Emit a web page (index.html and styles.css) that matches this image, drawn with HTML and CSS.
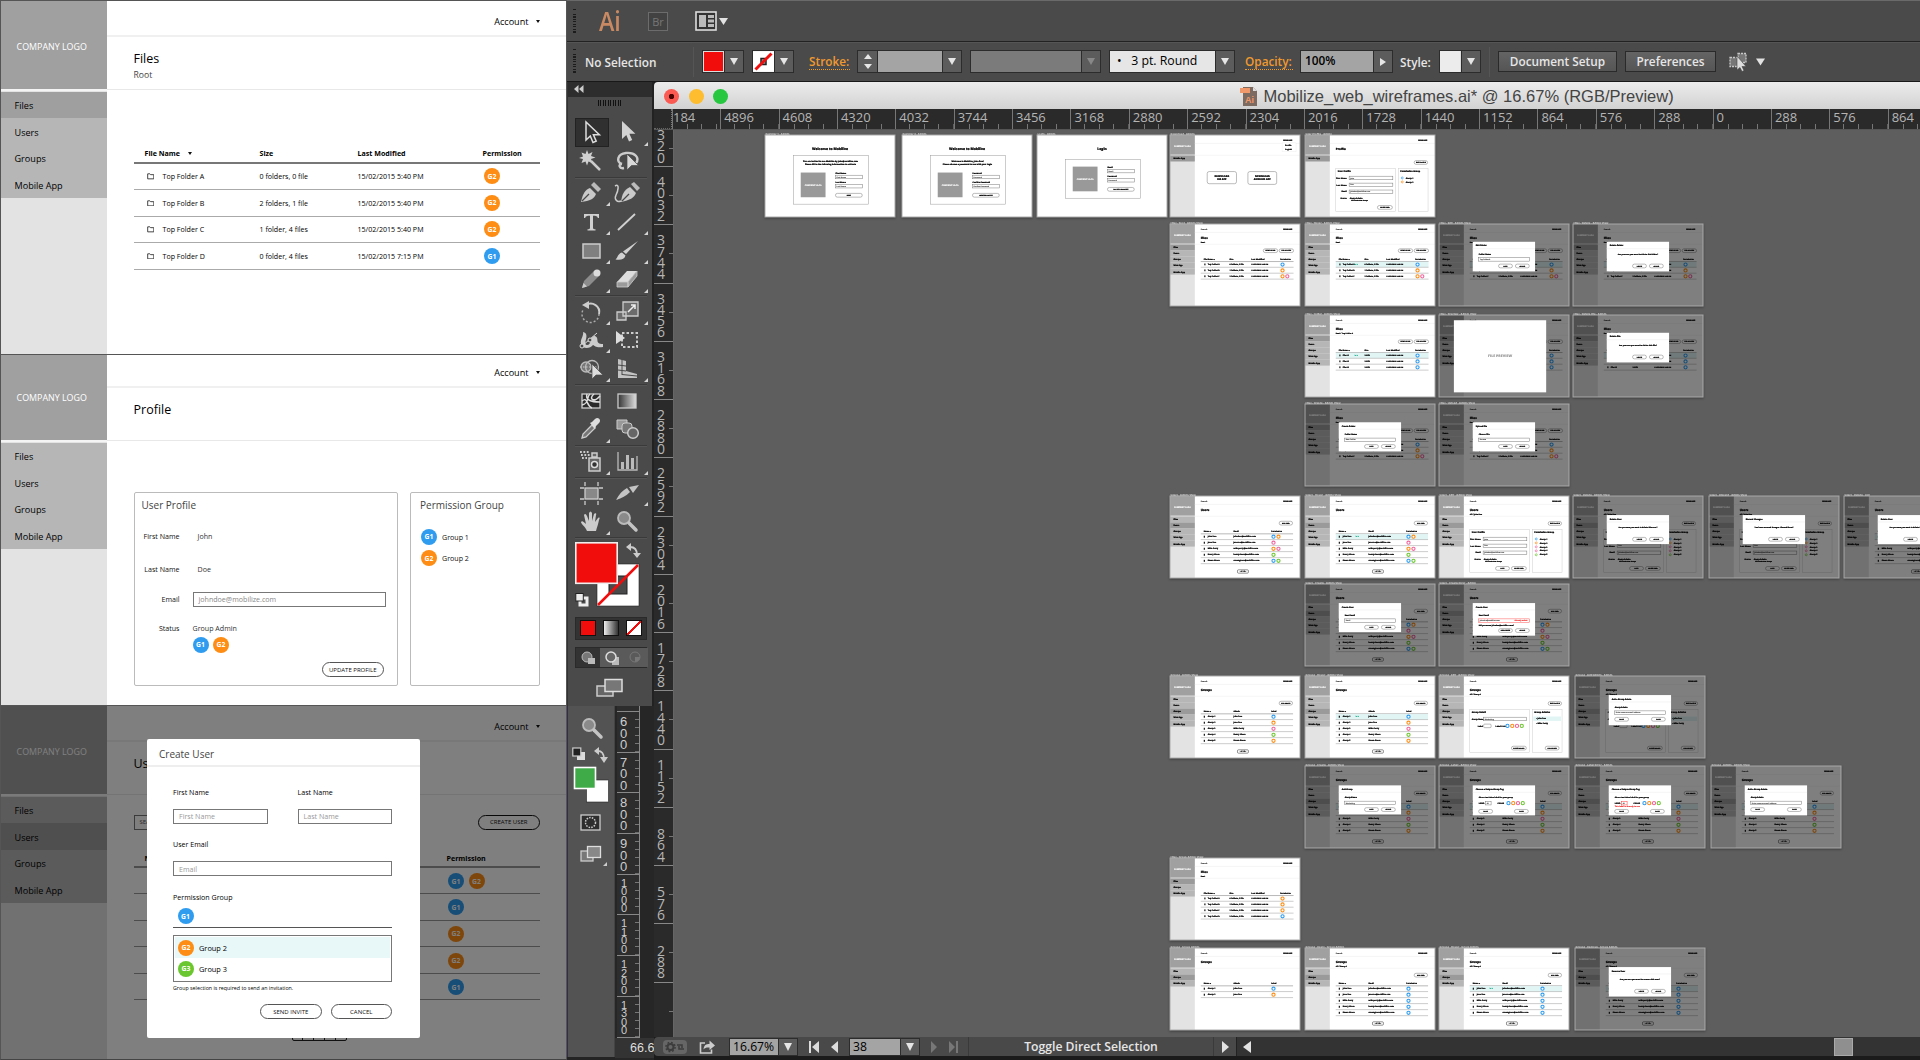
FILE: index.html
```html
<!DOCTYPE html>
<html lang="en">
<head>
<meta charset="utf-8">
<title>Mobilize_web_wireframes.ai</title>
<link rel="stylesheet" href="styles.css">
</head>
<body>
<div class="desktop">
<aside class="wires">
  <section class="wire wire-files">
    <div class="wire-in">
      <nav class="side"><div class="logo">COMPANY LOGO</div><a class="on">Files</a><a>Users</a><a>Groups</a><a>Mobile App</a></nav>
      <div class="main">
        <header class="acct">Account<i class="tri"></i></header>
        <div class="head"><h1>Files</h1><p>Root</p></div>
        <div class="table">
          <div class="tr th"><span>File Name<i class="tri"></i></span><span>Size</span><span>Last Modified</span><span>Permission</span></div>
          <div class="tr"><span><svg class="fold" viewBox="0 0 8 7"><path d="M.7.9h2.4l.8.9h3.4v4.5H.7z"/></svg>Top Folder A</span><span>0 folders, 0 file</span><span>15/02/2015 5:40 PM</span><span><b class="g g2">G2</b></span></div>
          <div class="tr"><span><svg class="fold" viewBox="0 0 8 7"><path d="M.7.9h2.4l.8.9h3.4v4.5H.7z"/></svg>Top Folder B</span><span>2 folders, 1 file</span><span>15/02/2015 5:40 PM</span><span><b class="g g2">G2</b></span></div>
          <div class="tr"><span><svg class="fold" viewBox="0 0 8 7"><path d="M.7.9h2.4l.8.9h3.4v4.5H.7z"/></svg>Top Folder C</span><span>1 folder, 4 files</span><span>15/02/2015 5:40 PM</span><span><b class="g g2">G2</b></span></div>
          <div class="tr"><span><svg class="fold" viewBox="0 0 8 7"><path d="M.7.9h2.4l.8.9h3.4v4.5H.7z"/></svg>Top Folder D</span><span>0 folder, 4 files</span><span>15/02/2015 7:15 PM</span><span><b class="g g1">G1</b></span></div>
        </div>
      </div>
    </div>
  </section>

  <section class="wire wire-profile">
    <div class="wire-in">
      <nav class="side"><div class="logo">COMPANY LOGO</div><a>Files</a><a>Users</a><a>Groups</a><a>Mobile App</a></nav>
      <div class="main">
        <header class="acct">Account<i class="tri"></i></header>
        <div class="head"><h1>Profile</h1></div>
        <div class="cards">
          <div class="card">
            <h2>User Profile</h2>
            <dl class="form">
              <dt>First Name</dt><dd class="in">John</dd>
              <dt>Last Name</dt><dd class="in">Doe</dd>
              <dt>Email</dt><dd><div class="field">johndoe@mobilize.com</div></dd>
              <dt>Status</dt><dd>Group Admin</dd>
            </dl>
            <div class="badges"><b class="g g1">G1</b><b class="g g2">G2</b></div>
            <div class="pill">UPDATE PROFILE</div>
          </div>
          <div class="card slim">
            <h2>Permission Group</h2>
            <div class="opt"><b class="g g1">G1</b>Group 1</div>
            <div class="opt"><b class="g g2">G2</b>Group 2</div>
          </div>
        </div>
      </div>
    </div>
  </section>

  <section class="wire wire-users">
    <div class="wire-in">
      <nav class="side"><div class="logo">COMPANY LOGO</div><a>Files</a><a class="on">Users</a><a>Groups</a><a>Mobile App</a></nav>
      <div class="main">
        <header class="acct">Account<i class="tri"></i></header>
        <div class="head"><h1>Users</h1></div>
        <div class="bar"><div class="field">SEARCH</div><div class="pill">CREATE USER</div></div>
        <div class="table">
          <div class="tr th"><span>Name</span><span>Permission</span></div>
          <div class="tr"><span></span><span><b class="g g1">G1</b><b class="g g2">G2</b></span></div>
          <div class="tr"><span></span><span><b class="g g1">G1</b></span></div>
          <div class="tr"><span></span><span><b class="g g2">G2</b></span></div>
          <div class="tr"><span></span><span><b class="g g2">G2</b></span></div>
          <div class="tr"><span></span><span><b class="g g1">G1</b></span></div>
        </div>
        <div class="pager"><i>&lt;</i><i>1</i><i>2</i><i>3</i><i>&gt;</i></div>
      </div>
    </div>
    <div class="shade"></div>
    <div class="modal">
      <h2>Create User</h2>
      <div class="modal-body">
        <div class="two"><label>First Name<span class="field">First Name</span></label><label>Last Name<span class="field">Last Name</span></label></div>
        <label>User Email<span class="field">Email</span></label>
        <label class="pg">Permission Group</label>
        <div class="chosen"><b class="g g1">G1</b></div>
        <div class="list"><div class="opt hot"><b class="g g2">G2</b>Group 2</div><div class="opt"><b class="g g3">G3</b>Group 3</div></div>
        <p class="hint">Group selection is required to send an invitation.</p>
        <div class="acts"><div class="pill">SEND INVITE</div><div class="pill">CANCEL</div></div>
      </div>
    </div>
  </section>
</aside>

<main class="app">
  <div class="appbar">
    <i class="grip"></i><span class="ai">Ai</span><span class="br">Br</span>
    <svg class="layout" width="34" height="20" viewBox="0 0 34 20"><rect x="1" y="1" width="20" height="18" fill="#333" stroke="#ddd" stroke-width="1.6"/><path d="M4 4h7v12H4zM13 4h6v3h-6zM13 8.500h6v3h-6zM13 13h6v3h-6z" fill="#bbb"/><path d="M24 7h9l-4.500 7z" fill="#e2e2e2"/></svg>
  </div>
  <div class="control">
    <i class="grip"></i><span class="sel">No Selection</span><i class="vsep"></i>
    <div class="combo c-fill"><span class="sw red"></span><i class="dd"></i></div>
    <div class="combo c-stroke"><svg class="sw" viewBox="0 0 21 20"><rect width="21" height="20" fill="#fff"/><rect x="8" y="7" width="5" height="6" fill="#999" stroke="#222" stroke-width="1.500"/><path d="M2.500 18L18.500 2" stroke="#f00f0f" stroke-width="3"/></svg><i class="dd"></i></div>
    <span class="lnk l-stroke">Stroke:</span>
    <div class="combo c-weight"><span class="spin"><i></i><i></i></span><span class="val"></span><i class="dd"></i></div>
    <div class="combo c-off"><span class="val"></span><i class="dd"></i></div>
    <div class="combo c-brush"><span class="val">•&nbsp;&nbsp; 3 pt. Round</span><i class="dd"></i></div>
    <span class="lnk l-op">Opacity:</span>
    <div class="combo c-op"><span class="val">100%</span><i class="dd rt"></i></div>
    <span class="sty">Style:</span>
    <div class="combo c-sty"><span class="sw"></span><i class="dd"></i></div>
    <i class="vsep v2"></i>
    <span class="btn b-doc">Document Setup</span><span class="btn b-pref">Preferences</span>
    <svg class="iso" width="38" height="20" viewBox="0 0 38 20"><path d="M2 5.500h8v9H2zM10 1.500h8v9h-8z" fill="#777" stroke="#c8c8c8" stroke-width="1.300" stroke-dasharray="2 1"/><path d="M9 4v14l3-2.500 2 4 2-1-2-4h4z" fill="#ddd" stroke="#444" stroke-width=".6"/><path d="M28 6.500h9l-4.500 7z" fill="#e2e2e2"/></svg>
  </div>

  <div class="work">
    <div class="tools-col">
      <div class="tools">
        <div class="tools-top"><svg width="10" height="8" viewBox="0 0 10 8"><path d="M4.500 0v8L0 4zM9.500 0v8L5 4z" fill="#ccc"/></svg></div>
        <div class="tools-grip"></div>
        <div class="grid">
          <span class="t on"><svg viewBox="0 0 28 28"><path d="M9 4v18l4.300-4 2.700 6.500 3.200-1.400-2.800-6.300h6z" fill="#333" stroke="#ddd" stroke-width="1.500"/></svg></span>
          <span class="t c"><svg viewBox="0 0 28 28"><path d="M9 3v18l4.300-4 2.700 6.500 3.200-1.400-2.800-6.300h6z" fill="#d2d2d2"/></svg></span>
          <span class="t"><svg viewBox="0 0 28 28"><path d="M10 3l1.500 4 4-2-1.500 4 4.500 1.500-4.500 1.500 1.500 4-4-1.500-1.500 4-1.500-4-4 1.500 1.500-4L2 11l4-1.500-1.500-4 4 1.500z" fill="#d0d0d0"/><path d="M14 14l9 9" stroke="#ccc" stroke-width="2.500"/></svg></span>
          <span class="t"><svg viewBox="0 0 28 28"><path d="M9 17c-6-2-5-10 4-11s14 5 10 10M9 17c-4 0-3 5 2 4" fill="none" stroke="#ccc" stroke-width="2.400"/><path d="M14 7v16l4.500-4.500h7z" fill="#d8d8d8" stroke="#4a4a4a" stroke-width=".7"/></svg></span>
          <i class="hr"></i>
          <span class="t c"><svg viewBox="0 0 28 28"><path d="M4 23c2-9 4-12 9-14l6 6c-2 5-6 7-15 8z" fill="#c9c9c9"/><path d="M5 22l7-7" stroke="#4a4a4a" stroke-width="1.200"/><path d="M14 6l3-3 7 7-3 3z" fill="#bbb"/></svg></span>
          <span class="t"><svg viewBox="0 0 28 28"><path d="M8 23c1-8 3-12 9-15l6 6c-2 5-6 7-15 9z" fill="#c9c9c9"/><path d="M9 22l7-7" stroke="#4a4a4a" stroke-width="1.200"/><path d="M18 5l3-2 6 6-3 3z" fill="#bbb"/><path d="M2 7c5-3 3 5 1 9s1 8 5 6" fill="none" stroke="#ccc" stroke-width="1.500"/></svg></span>
          <span class="t c"><svg viewBox="0 0 28 28"><path d="M7 6h15v4h-1.200c-.3-2-1.800-2.300-4.800-2.300v12c0 1.300 1 1.500 2.500 1.600V22.500h-8v-1.200c1.500-.1 2.500-.3 2.500-1.600v-12c-3 0-4.500.3-4.800 2.300H7z" fill="#d0d0d0"/></svg></span>
          <span class="t c"><svg viewBox="0 0 28 28"><path d="M5 22L22 6" stroke="#d0d0d0" stroke-width="1.800"/></svg></span>
          <span class="t c"><svg viewBox="0 0 28 28"><rect x="6" y="7" width="17" height="14" fill="#808080" stroke="#ccc" stroke-width="1.500"/></svg></span>
          <span class="t c"><svg viewBox="0 0 28 28"><path d="M25 4L13 17l-3-2.500z" fill="#d0d0d0"/><path d="M9 15.500l3.500 3c-1 4-5 5-10 4 2-1 2-6 6.500-7z" fill="#d0d0d0"/></svg></span>
          <span class="t c"><svg viewBox="0 0 28 28"><path d="M5 23l2-7L17 6l5 5-10 10z" fill="#8c8c8c"/><path d="M5 23l1.500-5 3.500 3.500z" fill="#ccc"/><circle cx="20" cy="8" r="3.500" fill="#ddd"/></svg></span>
          <span class="t c"><svg viewBox="0 0 28 28"><path d="M4 17L14 6h10L15 17z" fill="#ddd"/><path d="M4 17h11v5H4zM15 17l9-11v5l-9 11z" fill="#9a9a9a" stroke="#ccc" stroke-width=".8"/></svg></span>
          <i class="hr"></i>
          <span class="t c"><svg viewBox="0 0 28 28"><path d="M9 8a8.500 8.500 0 0 1 13 9" fill="none" stroke="#ccc" stroke-width="2"/><path d="M22 17A8.500 8.500 0 1 1 6 13" fill="none" stroke="#aaa" stroke-width="1.500" stroke-dasharray="2 2"/><path d="M5 8l7-4v8z" fill="#ccc"/></svg></span>
          <span class="t c"><svg viewBox="0 0 28 28"><path d="M10 5h15v14H10zM4 15h9v8H4z" fill="#6c6c6c" stroke="#ccc" stroke-width="1.300"/><path d="M15 15l7-7m-4 0h4v4" fill="none" stroke="#eee" stroke-width="1.500"/></svg></span>
          <span class="t c"><svg viewBox="0 0 28 28"><path d="M6 6c8 2-1 12 4 13 5 0 3-10 8-9 5 2-1 8 8 8v3c-7 1-8-1-10-2-3 4-11 4-12-1s3-8 2-12z" fill="#ccc"/><path d="M5 20L20 7" stroke="#ddd"/><circle cx="5" cy="20" r="2" fill="#4a4a4a" stroke="#ddd"/><circle cx="13" cy="14" r="2" fill="#4a4a4a" stroke="#ddd"/></svg></span>
          <span class="t"><svg viewBox="0 0 28 28"><rect x="9" y="7" width="15" height="14" fill="none" stroke="#ccc" stroke-width="2" stroke-dasharray="2.500 2"/><path d="M3 5v13l9-6z" fill="#ddd"/></svg></span>
          <span class="t c"><svg viewBox="0 0 28 28"><circle cx="9" cy="12" r="5" fill="#777" stroke="#bbb" stroke-width="1.300"/><circle cx="15" cy="12" r="6.500" fill="none" stroke="#bbb" stroke-width="1.300"/><path d="M3 12h18" stroke="#ccc" stroke-dasharray="1.500 1.500"/><path d="M15 9v15l4-4h7z" fill="#ddd" stroke="#4a4a4a" stroke-width=".7"/></svg></span>
          <span class="t c"><svg viewBox="0 0 28 28"><path d="M5 4l8 2v10l11 3v4H5z" fill="#c4c4c4"/><path d="M9 4v16M5 10l8 1M5 15l8 1M9 19.500l15 1.500" stroke="#4a4a4a" stroke-width="1"/></svg></span>
          <i class="hr"></i>
          <span class="t"><svg viewBox="0 0 28 28"><rect x="5" y="7" width="18" height="14" fill="#2b2b2b" stroke="#ccc" stroke-width="1.300"/><path d="M5 14c6-5 4 5 10 7M10 7c-2 6 4 8 13 8M17 7c-6 5 0 9 6 2M5 18c8-2 4-8 8-11" fill="none" stroke="#ddd" stroke-width="1.500"/></svg></span>
          <span class="t"><svg viewBox="0 0 28 28"><defs><linearGradient id="gr"><stop offset="0" stop-color="#333"/><stop offset="1" stop-color="#ddd"/></linearGradient></defs><rect x="5" y="7" width="18" height="14" fill="url(#gr)" stroke="#ccc" stroke-width="1.300"/></svg></span>
          <span class="t c"><svg viewBox="0 0 28 28"><path d="M5 23l1-4 9-9 3 3-9 9z" fill="#777" stroke="#ccc" stroke-width="1.300"/><path d="M13 8l2-1 3-3c3-3 7 1 4 4l-3 3-1 3z" fill="#ddd"/></svg></span>
          <span class="t"><svg viewBox="0 0 28 28"><path d="M4 5h10v9H4z" fill="#999" stroke="#ccc"/><rect x="9" y="8" width="10" height="10" rx="3" fill="#777" stroke="#ccc"/><circle cx="20" cy="18" r="5.300" fill="#666" stroke="#ccc" stroke-width="1.500"/></svg></span>
          <i class="hr"></i>
          <span class="t c"><svg viewBox="0 0 28 28"><path d="M12 11h11v13H12zM15 6h5v4h-5z" fill="#666" stroke="#ccc" stroke-width="1.500"/><circle cx="17.500" cy="17.500" r="3" fill="#333" stroke="#ddd" stroke-width="1.500"/><path d="M3 5h10M4 8h10M5 11h5" stroke="#ccc" stroke-width="1.800" stroke-dasharray="1.800 1.600"/></svg></span>
          <span class="t c"><svg viewBox="0 0 28 28"><path d="M5 5v18h19V9" fill="none" stroke="#bbb" stroke-width="1.300"/><path d="M8 15h3v7H8zM13 8h3v14h-3zM18 11h3v11h-3z" fill="#bbb"/></svg></span>
          <i class="hr"></i>
          <span class="t"><svg viewBox="0 0 28 28"><rect x="8" y="9" width="13" height="11" fill="#888" stroke="#ccc" stroke-width="1.300"/><path d="M3 9h4m15 0h4M3 20h4m15 0h4M8 3v4m0 15v4M21 3v4m0 15v4" stroke="#ccc" stroke-width="1.300"/></svg></span>
          <span class="t c"><svg viewBox="0 0 28 28"><path d="M3 21c3-6 7-10 11-12l3 4c-4 4-8 6-14 8zM16 8l10-2-6 8z" fill="#c4c4c4"/></svg></span>
          <span class="t c"><svg viewBox="0 0 28 28"><path d="M10 23c-2-5-6-7-6-9 1-2 3 0 5 2L7 7c1-2 2-1 3 1l2 5V5c1-2 2-2 3 0v8l2-7c1-1 3-1 2 1l-1 7 3-4c2-1 2 0 1 2-1 5-2 7-3 11z" fill="#ccc"/></svg></span>
          <span class="t"><svg viewBox="0 0 28 28"><circle cx="11" cy="10" r="6" fill="#8a8a8a" stroke="#bbb" stroke-width="1.800"/><path d="M16 15l7 7" stroke="#c4c4c4" stroke-width="3.500" stroke-linecap="round"/></svg></span>
          <i class="hr"></i>
        </div>
        <svg class="paint" width="72" height="69" viewBox="0 0 72 69">
          <rect x="22" y="25" width="42" height="42" fill="#fff" stroke="#222" stroke-width=".6"/><rect x="34" y="37" width="18" height="18" fill="#4a4a4a" stroke="#222"/><path d="M23 66L63 26" stroke="#f20d0d" stroke-width="2.500"/>
          <rect x=".8" y="3.800" width="41.400" height="40.500" fill="#f20d0d" stroke="#eee" stroke-width="1.600"/>
          <path d="M55 8c5 0 7 3 7 8" fill="none" stroke="#ccc" stroke-width="1.800"/><path d="M51 8l5-4v8zM58 14h8l-4 5z" fill="#ccc"/>
          <rect x="5" y="59" width="7" height="7" fill="none" stroke="#eee" stroke-width="3"/><rect x=".8" y="54.500" width="7.500" height="7.500" fill="#eee" stroke="#222"/>
        </svg>
        <div class="modes"><i class="m1"></i><i class="m2"></i><i class="m3"></i></div>
        <div class="draws"><span><svg viewBox="0 0 24 20"><circle cx="11" cy="9" r="5" fill="#777" stroke="#bbb"/><path d="M12 10h7v6h-7z" fill="#bbb"/></svg></span><span><svg viewBox="0 0 24 20"><path d="M12 9h7v8h-7z" fill="#bbb"/><circle cx="11" cy="9" r="5" fill="#666" stroke="#ddd" stroke-width="1.500"/></svg></span><span><svg viewBox="0 0 24 20"><circle cx="11" cy="9" r="5" fill="none" stroke="#777"/><path d="M11 9h5a5 5 0 0 1-5 5z" fill="#777"/></svg></span></div>
        <svg class="screen" width="27" height="20" viewBox="0 0 27 20"><rect x="1" y="8" width="16" height="10" fill="#666" stroke="#ccc" stroke-width="1.500"/><rect x="9" y="1.500" width="17" height="12" fill="#777" stroke="#ddd" stroke-width="1.500"/></svg>
      </div>
      <div class="under">
        <div class="ptools">
          <svg width="46" height="175" viewBox="0 -2 46 175"><circle cx="21" cy="17" r="6" fill="#8a8a8a" stroke="#bbb" stroke-width="1.800"/><path d="M26 22l7 7" stroke="#c4c4c4" stroke-width="3.500" stroke-linecap="round"/>
          <path d="M9 44h8v8H9z" fill="#ddd"/><rect x="4.800" y="40" width="8" height="8" fill="#222" stroke="#ccc" stroke-width="1.200"/><path d="M28 43c6-1 8 3 8 8" fill="none" stroke="#ccc" stroke-width="1.800"/><path d="M26 43l5-4v8zM32 49h8l-4 6z" fill="#ccc"/>
          <rect x="18.500" y="72" width="22" height="22" fill="#fff" stroke="#222" stroke-width=".6"/><rect x="6.500" y="59.500" width="21" height="21" fill="#3faa48" stroke="#fff" stroke-width="1.600"/>
          <rect x="13" y="107" width="19" height="15" fill="#2d2d2d" stroke="#ccc" stroke-width="1.300"/><circle cx="22.500" cy="114.500" r="5" fill="none" stroke="#ccc" stroke-width="1.500" stroke-dasharray="1.500 1.200"/>
          <rect x="13" y="143" width="12" height="10" fill="#777" stroke="#ccc" stroke-width="1.300"/><rect x="19.500" y="138.500" width="13" height="11" fill="#888" stroke="#ddd" stroke-width="1.300"/><path d="M39 154v4h-4z" fill="#ccc"/></svg>
        </div>
        <div class="pdoc">
          <div class="prule"><span></span><span>600</span><span>700</span><span>800</span><span>900</span><span class="s">1000</span><span class="s">1100</span><span class="s">1200</span><span class="s">1300</span></div>
          <div class="pzoom">66.6</div>
        </div>
      </div>
    </div>

    <div class="doc">
      <div class="title"><i class="lt r"></i><i class="lt y"></i><i class="lt n"></i>
        <svg width="18" height="19" viewBox="0 0 18 19"><path d="M3 0h10l4 4v15H3z" fill="#7d6a60"/><path d="M13 0v4h4z" fill="#ddd"/><path d="M0 1h10v5H0z" fill="#f2996b"/><text x="5" y="16" class="aitxt">Ai</text></svg>
        <span>Mobilize_web_wireframes.ai* @ 16.67% (RGB/Preview)</span></div>
      <div class="hrule"><div class="corner"></div><div class="hticks"><span class="first">184</span><span>4896</span><span>4608</span><span>4320</span><span>4032</span><span>3744</span><span>3456</span><span>3168</span><span>2880</span><span>2592</span><span>2304</span><span>2016</span><span>1728</span><span>1440</span><span>1152</span><span>864</span><span>576</span><span>288</span><span>0</span><span>288</span><span>576</span><span class="last">864</span></div></div>
      <div class="view">
        <div class="vrule"><span>320</span><span>4032</span><span>3744</span><span>3456</span><span>3168</span><span>2880</span><span>2592</span><span>2304</span><span>2016</span><span>1728</span><span>1440</span><span>1152</span><span>864</span><span>576</span><span>288</span><span></span></div>
        <div class="canvas" id="canvas"></div>
      </div>
      <div class="status">
        <div class="status-l">
          <svg class="gear" width="24" height="14" viewBox="0 0 24 14"><rect width="24" height="14" rx="4" fill="#666"/><circle cx="7.500" cy="7" r="3" fill="none" stroke="#3c3c3c" stroke-width="2"/><circle cx="7.500" cy="7" r="4.600" fill="none" stroke="#3c3c3c" stroke-width="1.500" stroke-dasharray="1.800 1.800"/><path d="M14 5h5v3m2 1h-5V6" fill="none" stroke="#3c3c3c" stroke-width="1.500"/></svg>
          <svg class="share" width="17" height="14" viewBox="0 0 17 14"><path d="M6 3H1.500v10h11V9.500" fill="none" stroke="#ccc" stroke-width="1.600"/><path d="M4.500 9.500C5 5 7 4 10.500 4V.5L16 5.500l-5.500 4.500V7.500C8 7.300 6 7.500 4.500 9.500z" fill="#ccc"/></svg>
          <div class="combo s-zoom"><span class="val">16.67%</span><i class="dd"></i></div>
          <svg class="nav1" width="32" height="12" viewBox="0 0 32 12"><path d="M1 0h2v12H1zM11 0v12L4 6zM30 0v12l-7-6z" fill="#ddd"/></svg>
          <div class="combo s-page"><span class="val">38</span><i class="dd"></i></div>
          <svg class="nav2" width="30" height="12" viewBox="0 0 30 12"><path d="M1 0v12l6-6zM19 0v12l6-6zM26 0h2v12h-2z" fill="#777"/></svg>
          <div class="msg">Toggle Direct Selection</div>
          <i class="go"></i>
        </div>
        <div class="scroll"><i class="back"></i><i class="thumb"></i></div>
      </div>
    </div>
  </div>
</main>
</div>
<script src="artboards.js"></script>
</body>
</html>
```
FILE: styles.css
```css
*{box-sizing:border-box}
body{margin:0;background:#1b1b1b;font-family:"Open Sans","Noto Sans",sans-serif;overflow:hidden}
h1,h2,p,dl,dd{margin:0;font-weight:400}
i{font-style:normal}
svg{display:block;flex:none}
.desktop{display:flex;width:1920px;height:1060px;overflow:hidden}

/* wireframe previews */
.wires{width:567px;flex:none;display:flex;flex-direction:column;border-left:1px solid #555;border-right:1px solid #555;border-bottom:1px solid #444;background:#fff;color:#000;font-size:7.1px}
.wire{position:relative;border-top:1px solid #555;overflow:hidden;flex:none}
.wire-files{height:354px}
.wire-profile{height:351px}
.wire-users{height:354px}
.wire-profile .wire-in{margin-top:-3px}
.wire-in{display:flex;height:354px}
.side{width:105.500px;flex:none;background:#e3e3e3}
.logo{height:88px;background:#a0a0a0;color:#fff;font-size:8.900px;display:flex;align-items:center;justify-content:center;margin-bottom:2.500px;box-shadow:0 2px 0 #f4f4f4;padding:2px 4px 0 0}
.side a{display:flex;align-items:center;height:26.700px;padding:1px 0 0 13.500px;font-size:9.100px;color:#000;background:#b6b6b6}
.side a.on{background:#9f9f9f}
.main{flex:1;min-width:0}
.acct{height:36px;border-bottom:2px solid #f0f0f0;display:flex;align-items:center;justify-content:flex-end;padding:6px 26px 0 0;font-size:9.100px;gap:7.500px}
.tri{display:inline-block;border:2.300px solid transparent;border-top:3px solid #111;border-bottom:0}
.th .tri{margin-left:8px;vertical-align:2px}
.head{height:53px;border-bottom:1px solid #e8e8e8;padding:12px 0 0 27px}
.head h1{font-size:12.500px;line-height:19px}
.head p{font-size:8.600px;line-height:14px;color:#444}
.table{width:406px;margin:55px 0 0 27px}
.tr{display:grid;grid-template-columns:126px 98px 125px 57px;height:26.600px;border-bottom:1.500px solid #aaa;align-items:center;white-space:nowrap}
.tr span{display:flex;align-items:center}
.tr .g{margin-left:1.500px}
.tr .g+.g{margin-left:0}
.tr span:first-child{padding-left:13px;gap:8.500px}
.th{height:18.500px;font-weight:700;border-bottom:2px solid #777}
.th span:first-child{padding-left:11px!important;gap:0!important}
.fold{width:7.500px;height:6.500px;fill:none;stroke:#222;stroke-width:.9}
.g{display:inline-flex;width:16px;height:16px;border-radius:50%;align-items:center;justify-content:center;color:#fff;font-size:6.800px;font-weight:700;flex:none;background:#2f9cf0}
.g2{background:#fd8d14}
.g3{background:#6bc72f}
.cards{display:flex;gap:12px;padding:51px 0 0 27px}
.card{width:264.500px;height:194px;border:1.500px solid #bbb;border-radius:2px;padding:5px 8px 0 7px;color:#111}
.card.slim{width:130px;padding-left:9px}
.card h2{font-size:10px;line-height:15px;color:#444}
.form{display:grid;grid-template-columns:38px 1fr;column-gap:13px;grid-template-rows:33px 32px 29px 28px;align-items:center;padding-top:6.500px;margin-bottom:-5px;color:#333}
.form dt{text-align:right;color:#111;white-space:nowrap}
.form .in{padding-left:5px}
.form .field{width:193px}
.field{display:flex;align-items:center;height:15px;border:1px solid #777;padding-left:5px;color:#888;background:#fff}
.badges{display:flex;gap:4.500px;padding-left:51px;margin-top:-1.500px}
.pill{width:61.500px;height:15px;border:1px solid #555;border-radius:8px;display:flex;align-items:center;justify-content:center;font-size:6px;color:#111}
.card .pill{margin:9.500px 0 0 180.500px}
.opt{display:flex;align-items:center;gap:5px;height:16px}
.card .opt{margin-top:15.500px;padding-left:1px}
.card .opt + .opt{margin-top:5.500px}
.bar{display:flex;justify-content:space-between;width:406px;margin:19.500px 0 0 27px}
.bar .field{width:90px;font-size:6px;color:#555}
.bar .pill{border-color:#111}
.wire-users .table{margin-top:20px}
.wire-users .th{height:18px}
.wire-users .tr{grid-template-columns:313px 93px;border-bottom-color:#999}
.wire-users .tr span{gap:4.500px}
.wire-users .tr:nth-child(2){padding-top:2px}
.wire-users .tr:nth-child(n+3){padding-top:1px}
.pager{display:flex;width:55px;height:13px;margin:28px 0 0 185px;border:1px solid #222;border-radius:2px}
.pager i{flex:1;border-right:1px solid #222;text-align:center;line-height:11px}
.pager i:last-child{border:0}
.shade{position:absolute;inset:0;background:rgba(0,0,0,.5)}
.modal{position:absolute;left:146px;top:32.500px;width:273px;height:299px;background:#fff;border-radius:2px}
.modal h2{height:28px;border-bottom:2px solid #eee;padding:1px 0 0 12px;font-size:10px;line-height:28px;color:#444}
.modal-body{padding:20px 28px 0 26px}
.two{display:flex;justify-content:space-between}
.two label{width:94.500px}
.modal label{display:block;line-height:10px;height:52.700px}
.modal .field{margin-top:12px;color:#999}
.modal label.pg{height:10px}
.chosen{height:26px;border-bottom:1px solid #555;padding:6.500px 0 0 4.500px}
.list{height:47px;margin-top:7px;border:1px solid #777;padding:1px}
.list .opt{height:21.300px;padding-left:3px;font-size:7.400px}
.list .hot{background:#e8f7f8}
.hint{font-size:5.300px;line-height:10px;padding-top:1px}
.acts{display:flex;justify-content:flex-end;gap:9px;margin-top:11.500px}

/* application frame */
.app{width:1353px;display:flex;flex-direction:column;background:#1b1b1b;color:#e6e6e6}
.appbar{height:42px;background:#4a4a4a;border-top:1.500px solid #6a6a6a;border-bottom:1px solid #222;display:flex;align-items:center;padding-left:6px}
.grip{width:3px;height:25px;background:repeating-linear-gradient(#1c1c1c 0 1px,#4a4a4a 1px 2.500px);flex:none}
.ai{width:28px;margin-left:23px;font:600 27px/34px "Open Sans";color:#c98a63;transform:scaleX(.86);transform-origin:left}
.br{width:20px;height:19px;margin-left:21px;border:1.500px solid #6c6c6c;background:#424242;color:#777;font-size:11px;line-height:17px;text-align:center}
.layout{margin-left:27px}
.control{height:40px;background:#4a4a4a;border-top:1px solid #555;border-bottom:1.500px solid #181818;display:flex;align-items:center;padding:0 0 1px 6px;font-size:11.800px;font-weight:600;white-space:nowrap}
.sel{width:100px;margin-left:9px}
.vsep{width:1px;height:30px;background:#3a3a3a;border-right:1px solid #555;flex:none;margin-left:8px}
.combo{display:flex;height:23px;border:1.500px solid #2c2c2c;flex:none;background:#a4a4a4;color:#000}
.combo .sw{flex:1;border-right:1px solid #ddd;background:#ececec;height:100%}
.combo .red{background:#f20d0d;border:1.500px solid #ddd}
.combo .val{flex:1;line-height:19px;padding-left:4px}
.dd{width:19px;flex:none;background:#5c5c5c;border-left:1.500px solid #2c2c2c;display:flex;align-items:center;justify-content:center}
.dd::after{content:"";border:4px solid transparent;border-top:7px solid #e6e6e6;border-bottom:0}
.dd.rt::after{border:4.500px solid transparent;border-left:6px solid #e6e6e6;border-right:0}
.c-fill{width:42px;margin-left:8px}
.c-stroke{width:42px;margin-left:8px}
.c-stroke .sw{width:21px;flex:none;border:0}
.lnk{color:#f0992f;border-bottom:1.500px dotted #f0992f;line-height:15px}
.l-stroke{width:41px;margin-left:15px}
.c-weight{width:105px;margin-left:7px}
.spin{width:20px;background:#5c5c5c;border-right:1.500px solid #2c2c2c;display:grid;place-items:center}
.spin i{border:4px solid transparent;border-bottom:5px solid #e6e6e6;border-top:0}
.spin i+i{transform:scaleY(-1)}
.c-off{width:131px;margin-left:8px;background:#7b7b7b}
.c-off .dd::after{border-top-color:#888}
.c-brush{width:126px;margin-left:8px;background:#e6e6e6;font-weight:400;font-size:12.300px}
.c-brush .val{padding-left:7px}
.l-op{width:48px;margin-left:10px}
.c-op{width:93px;margin-left:7px}
.sty{width:32px;margin-left:7px}
.c-sty{width:42px;margin-left:7px}
.v2{margin-left:8px}
.btn{height:21px;border:1.500px solid #2a2a2a;background:linear-gradient(#646464,#555);text-align:center;line-height:18px}
.b-doc{width:119px;margin-left:8px}
.b-pref{width:91px;margin-left:8px}
.iso{margin-left:12px}
.work{display:flex;height:978px}
.tools-col{width:87px;flex:none;display:flex;flex-direction:column}
.tools{height:624px;background:#4a4a4a;border-right:2px solid #222;border-left:1px solid #333;flex:none}
.tools-top{height:15px;background:#2d2d2d;padding:3px 0 0 6px}
.tools-grip{width:25px;height:6px;margin:3px 0 0 30px;background:repeating-linear-gradient(90deg,#111 0 1px,#4a4a4a 1px 2.500px)}
.grid{display:grid;grid-template-columns:34px 38px;grid-auto-rows:auto;margin:12px 0 0 7px}
.t{height:28.800px;display:flex;align-items:center;justify-content:center;position:relative}
.t svg{width:28px;height:28px;margin-left:-1.500px}
.t.on{background:#303030;border:1px solid #222}
.t.c::after{content:"";position:absolute;right:-1px;bottom:1px;border:2px solid #d4d4d4;border-left-color:transparent;border-top-color:transparent}
.hr{grid-column:1/3;height:3px;background:linear-gradient(transparent 1px,#3a3a3a 1px 2px,#555 2px)}
.paint{margin:0 0 0 7px}
.modes,.draws{display:flex;width:72px;margin:8.500px 0 0 7px;border:1px solid #2a2a2a}
.modes{height:23px;background:#333;align-items:center;justify-content:space-around}
.modes i{width:16px;height:16px;border:1.500px solid #111}
.m1{background:#f20d0d}
.m2{background:linear-gradient(90deg,#eee,#333)}
.m3{background:linear-gradient(45deg,#fff 44%,#f20d0d 44% 56%,#fff 56%);transform:scaleX(-1)}
.draws{height:21px;margin-top:7px}
.draws span{flex:1;background:#5a5a5a}
.draws span:first-child{background:#333}
.draws svg{width:24px;height:20px}
.screen{margin:10.500px 0 0 28px}
.under{flex:1;display:flex;background:#242424}
.ptools{width:48px;background:#535353;border-left:1px solid #332d48;border-right:1px solid #444;height:351px}
.pdoc{flex:1;background:#262626}
.prule{width:23px;margin-left:2px;height:332px;background:#2d2d2d;border-right:1px solid #888}
.prule span{display:block;height:40.700px;border-bottom:1px solid #888;color:#ccc;font:13px/11.500px "Liberation Sans";width:22px;padding:4px 11px 0 3px;word-break:break-all;background:repeating-linear-gradient(transparent 0 7.100px,#777 7.100px 8.100px) right/4px 100% no-repeat}
.prule span:first-child{height:6px}
.prule .s{font-size:11px;line-height:8.500px;padding-left:4px;padding-right:12px}
.pzoom{height:20px;background:#333;color:#ddd;font:12.500px/20px "Liberation Sans";padding-left:15px}

/* document window */
.doc{flex:1;min-width:0;display:flex;flex-direction:column}
.title{height:27px;background:linear-gradient(#ececec,#d2d2d2);border-radius:4px 0 0 0;display:flex;align-items:center;color:#444;font:16.500px "Liberation Sans";padding-left:10px;padding-top:2px;flex:none}
.lt{width:15px;height:15px;border-radius:50%;margin-right:9.500px;flex:none}
.r{background:radial-gradient(#4a0502 0 2.500px,#fb5a52 3px)}
.y{background:#fdbd2e}
.n{background:#27c840}
.title svg{margin-left:502px;margin-right:6px}
.title span{white-space:nowrap}
.aitxt{font:700 9px "Liberation Sans";fill:#f2996b}
.hrule{height:21px;display:flex;background:#2a2a2a;flex:none;border-bottom:1px solid #555}
.corner{width:18px;flex:none;border-right:1px dotted #777;border-bottom:1px dotted #666}
.hticks{display:flex;flex:1;min-width:0}
.hticks span{width:58.380px;flex:none;border-left:1px solid #777;color:#b5b5b5;font-size:13px;line-height:17px;padding-left:3px;background:repeating-linear-gradient(90deg,transparent 0 13.600px,#777 13.600px 14.600px) bottom/100% 5px no-repeat}
.hticks .first{width:48.200px;padding-left:0}
.hticks .last{width:auto;flex:1}
.view{display:flex;height:907px;flex:none}
.vrule{width:20px;background:#2a2a2a;flex:none;overflow:hidden;border-right:1px solid #666}
.vrule span{display:flex;align-items:flex-end;height:58.250px;border-bottom:1px solid #888;color:#b5b5b5;font-size:14px;line-height:11.300px;padding:0 7px 3px 3px;word-break:break-all;background:linear-gradient(#777,#777) right 50%/4px 1px no-repeat}
.vrule span:first-child{height:37px}
.vrule span:last-child{border:0}
.canvas{position:relative;flex:1;background:#5e5e5e;overflow:hidden}
.board{position:absolute;overflow:visible;filter:drop-shadow(0 1px 1px rgba(0,0,0,.35))}
.board text{font-family:"Open Sans",sans-serif;font-weight:800;text-rendering:geometricPrecision}
.status{height:19px;display:flex;flex:none}
.status-l{width:582px;flex:none;background:#494949;border-radius:4px 0 0 4px;display:flex;align-items:center;font-size:12.200px}
.gear{margin-left:9px}
.share{margin-left:12px}
.status .combo{height:18px}
.status .val{line-height:16px;padding-left:3px}
.status .dd::after{border-top-width:8px}
.s-zoom{width:69px;margin-left:13px}
.nav1{margin-left:10px}
.s-page{width:71px;margin-left:9px}
.nav2{margin-left:10px}
.msg{flex:1;margin-left:8px;height:19px;border-left:1px solid #3a3a3a;border-right:1px solid #3a3a3a;text-align:center;line-height:20px;font-weight:600}
.go{border:6px solid transparent;border-left:7px solid #e2e2e2;border-right:0;margin:0 7px 0 8px}
.scroll{flex:1;background:#333;display:flex;align-items:center;border-left:1px solid #222}
.back{border:6px solid transparent;border-right:8px solid #e2e2e2;border-left:0;margin-left:6px}
.thumb{width:19px;height:18px;background:#8f8f8f;border:1px solid #aaa;margin-left:583px}
```
FILE: artboards.js
```js
// Draws the artboards of the document as small SVG pages on the canvas.
const W = 131, H = 83;
const OX = 674, OY = 130;
const C = { b: '#2f9cf0', o: '#fd8d14', p: '#f0649f', g: '#6bc72f' };

const rect = (x, y, w, h, fill, stroke, rx) =>
  `<rect x="${x}" y="${y}" width="${w}" height="${h}" fill="${fill}"${stroke ? ` stroke="${stroke}" stroke-width=".5"` : ''}${rx ? ` rx="${rx}"` : ''}/>`;
const text = (x, y, s, size = 1.9, fill = '#000', anchor = 'start') =>
  `<text x="${x}" y="${y + size * 0.36}" font-size="${size}" fill="${fill}" stroke="${fill}" stroke-width="${fill === '#000' ? 0.22 : 0.08}" text-anchor="${anchor}">${s}</text>`;
const line = (x1, x2, y, c = '#aaa') => `<path d="M${x1} ${y}H${x2}" stroke="${c}" stroke-width=".6"/>`;
const dot = (x, y, c) => `<ellipse cx="${x}" cy="${y}" rx="1.6" ry="1.6" fill="#fff" stroke="${C[c]}" stroke-width="1.1"/>`;
const pill = (x, y, w, s) => rect(x, y - 1.9, w, 3.8, '#fff', '#777', 1.9) + text(x + w / 2, y, s, 1.5, '#000', 'middle');
const field = (x, y, w, s = '', c = '#777') => rect(x, y - 1.8, w, 3.6, '#fff', c) + text(x + 1, y, s, 1.7, '#555');

function chrome(title, sub, active, opts = {}) {
  const items = opts.items || ['Files', 'Users', 'Groups', 'Web App', 'Mobile App'];
  let s = rect(0, 0, W, H, '#fff') + rect(0, 0, 25, H, '#e3e3e3') + rect(0, 0, 25, 20, '#a0a0a0');
  s += text(12.5, 11, 'COMPANY LOGO', 2, '#fff', 'middle') + rect(0, 20, 25, 0.7, '#eee');
  items.forEach((n, i) => {
    s += rect(0, 20.7 + i * 6.1, 25, 6.1, n === active ? '#9a9a9a' : '#b6b6b6') + text(3.5, 24 + i * 6.1, n, 2);
  });
  s += line(25, W, 8.5, '#eee') + line(25, W, 20.5, '#eee');
  if (!opts.plain) s += text(31, 5.3, 'Search', 1.9, '#333');
  s += text(114, 5.5, 'Account', 2.2) + text(31, 14.3, title, 3);
  return s + (sub ? text(31, 18.2, sub, 1.8) : '');
}

function files(o) {
  const items = o.items;
  let s = chrome('Files', o.inner ? 'Root / Top Folder A' : 'Root', 'Files', { items });
  if (!items) s += pill(94, 27, 14.5, 'NEW FOLDER') + pill(110, 27, 14.5, 'UPLOAD FILE');
  [['File Name  ▾', 34], ['Size', 60], ['Last Modified', 82], ['Permission', 111]].forEach(h => { s += text(h[1], 35.7, h[0]); });
  s += line(31, 124.5, 38, '#888');
  o.rows.forEach((r, i) => {
    const y = 41 + i * 6;
    if (o.hot && i === 0) s += rect(31, 38.3, 93.5, 5.4, '#e2f5f5') + text(50, y, '✎ ✕', 1.8, '#0ba37f');
    s += rect(34.5, y - 1, 1.3, 1.8, '#222') + text(38, y, o.inner ? 'File 0' + (i + 1) : 'Top Folder ' + 'ABCD'[i]);
    s += text(60, y, o.inner ? '24 KB' : i + ' folders, 1 file') + text(82, y, '15/02/2015 5:40 PM', 1.75);
    [...r].forEach((c, j) => { s += dot(113.4 + j * 4.8, y, c); });
    s += line(31, 124.5, 43.8 + i * 6);
  });
  return s;
}

function people(o) {
  const g = o.kind === 'Groups';
  let s = chrome(o.kind, o.sub, o.kind, { items: o.items });
  if (!o.nobtn) s += pill(110, 27.5, 13.5, g && !o.sub ? 'ADD GROUP' : 'ADD USER');
  const asGroup = g && !o.sub;
  s += text(34, 36, 'Name  ▾') + text(64, 36, asGroup ? 'Admin' : 'Email') + text(102, 36, asGroup ? 'Label' : 'Permission') + line(31, 124, 38.3, '#888');
  const names = ['John Doe', 'Jane Roe', 'Mike Perry', 'Henry Olson', 'Susan Green'];
  const mails = ['johndoe@mobilize.com', 'janeroe@mobilize.com', 'mikeperry@mobilize.com', 'henryolson@mobilize.com', 'susangreen@mobilize.com'];
  o.rows.forEach((r, i) => {
    const y = 41.2 + i * 6.1;
    if (o.hot && i === 0) s += rect(31, 38.6, 93, 5.5, '#e2f5f5') + text(51, y, '✎ ✕', 1.8, '#0ba37f');
    s += rect(34, y - 1, 1.2, 2, '#111') + text(38, y, asGroup ? 'Group ' + (i + 1) : names[i]) + text(64, y, asGroup ? names[i] : mails[i]);
    [...r].forEach((c, j) => { s += dot(104.3 + j * 5, y, c); });
    s += line(31, 124, 44.1 + i * 6.1);
  });
  if (o.rows.length > 2) s += rect(68, 74.7, 11, 3.4, '#fff', '#222', 1) + text(73.5, 76.4, '‹ 1 2 3 ›', 1.8, '#000', 'middle');
  return s;
}

function profile(o) {
  const v = o.group;
  let s = chrome(o.title, o.sub, o.active, { items: o.items, plain: o.plain });
  s += pill(110, 27.8, 13.5, 'EDIT PROFILE') + rect(31, 33.7, 60, 43.5, '#fff', '#ccc') + rect(94, 33.7, 30, 43.5, '#fff', '#ccc');
  s += text(33, 36.5, v ? 'Group Detail' : 'User Profile', 2.2) + text(96, 36.5, v ? 'Group Admins' : 'Permission Group', 2.2);
  if (v) {
    s += text(33, 43.5, 'Group Name') + field(45, 43.5, 43, 'Marketing') + text(39, 50.5, 'Label') + rect(45, 48.700, 7.5, 3.6, '#fff', '#777', 1) + text(57, 50.5, 'Label Color');
    s += 'bopg'.split('').map((c, i) => dot(69 + i * 4.8, 50.5, c)).join('');
    s += rect(95, 41, 28, 4.5, '#e2f5f5') + text(98, 43.3, '▪ John Doe') + text(98, 48, '▪ Mike Perry') + pill(73, 73, 15, 'DELETE GROUP') + pill(107, 73, 14, 'ADD ADMIN');
  } else {
    [['First Name', 'John'], ['Last Name', 'Doe'], ['Email', 'johndoe@mobilize.com']].forEach((r, i) => {
      s += text(42, 43.5 + i * 7, r[0], 1.9, '#000', 'end') + field(44.5, 43.5 + i * 7, 44, r[1]);
    });
    s += text(42, 64.3, 'Status', 1.9, '#000', 'end') + text(45, 64, 'Group Admin') + text(46.5, 66.5, 'All Permission Groups', 1.5);
    s += pill(73, 73.3, 15, 'DELETE USER') + (o.plain ? '' : pill(57, 73.3, 14, 'SAVE'));
    [...(o.plain ? 'bo' : 'boppg')].forEach((c, i) => { s += `<circle cx="98" cy="${43.5 + i * 4}" r="1" fill="#fff" stroke="${C[c]}" stroke-width=".7"/>` + text(101.5, 43.5 + i * 4, 'Group ' + (i + 1)); });
  }
  return s;
}

function dim(base, y, h, title, body) {
  return base + rect(0, 0, W, H, 'rgba(0,0,0,.5)') + rect(34, y, 62.8, h, '#fff') + text(37, y + 4, title, 2) + line(34, 96.8, y + 7, '#eee') +
    `<g transform="translate(0 ${y})">${body}</g>`;
}
const ask = s => text(65.4, 12.5, s, 1.8, '#000', 'middle') + pill(60, 24.5, 14, 'DELETE') + pill(77, 24.5, 14, 'CANCEL');
const entry = (l, v) => text(40, 12.5, l) + field(40, 17.8, 51, v) + pill(60, 24.5, 14, 'SAVE') + pill(77, 24.5, 14, 'CANCEL');

function welcome(title, lines, a, b, btn, login) {
  const d = login ? -6 : 0;
  let s = rect(0, 0, W, H, '#fff') + text(65.5, 14, title, 3.4, '#000', 'middle');
  s += rect(28.5, login ? 24.7 : 20.7, 76, login ? 39.3 : 49.3, '#fff', '#999');
  lines.forEach((l, i) => { s += text(66, 26.5 + i * 3.6, l, 2, '#000', 'middle'); });
  s += rect(36, 38 + d, 25, 25, '#999') + text(48.5, 51 + d, 'COMPANY LOGO', 2, '#fff', 'middle');
  return s + text(71, 38.7 + d, a) + field(71, 42.5 + d, 27, a) + text(71, 48 + d, b) + field(71, 51.8 + d, 27, b) + pill(71, 61 + d, 27, btn);
}

const three = ['Files', 'Groups', 'Mobile App'];
const F = files({ rows: ['b', 'o', 'op'] });
const FH = files({ rows: ['b', 'o', 'op'], hot: true });
const FI = files({ rows: ['b', 'b', 'b'], inner: true });
const FIH = files({ rows: ['b', 'b', 'b'], inner: true, hot: true });
const ur = ['bo', 'p', 'op', 'g', 'bg'], gr = ['b', 'o', 'p', 'g', 'o'];
const U = people({ kind: 'Users', rows: ur }), UH = people({ kind: 'Users', rows: ur, hot: true });
const G = people({ kind: 'Groups', rows: gr }), GH = people({ kind: 'Groups', rows: gr, hot: true });
const UP = profile({ title: 'Users', sub: 'All / John Doe', active: 'Users' });
const GP = profile({ title: 'Groups', sub: 'All / Group 1', active: 'Groups', group: true });
const all = ['b', 'b', 'b', 'b', 'b'];
const GU = people({ kind: 'Groups', sub: 'All / Group 1', rows: all, items: three });
const GUH = people({ kind: 'Groups', sub: 'All / Group 1', rows: all, items: three, hot: true });
const unique = err => text(40, 12.3, 'Give a two letter label for your group', 1.8) + text(40, 18, 'LABEL') + field(47, 18, 5.5, 'G1', err ? '#f33' : '#777') +
  text(59, 18, 'COLOR') + ['b', 'o', 'p', 'g'].map((c, i) => dot(70 + i * 4.8, 18, c)).join('') + (err ? text(40, 21.3, 'This label is already in use', 1.9, '#e22') : '') +
  pill(40, 26.3, 14, 'BACK') + pill(76, 26.3, 14, 'DONE');
const emailForm = entry('User Email', 'Email');
const emailErr = text(40, 12.5, 'User Email') + field(40, 17.8, 51, 'johndoe@mobilize.com', '#f55') + text(76, 17.8, 'Already exists', 1.8, '#e22') +
  text(40, 22.3, 'Did you mean johndoe@mobilize.com?', 1.8) + pill(60, 27.8, 14, 'SEND INVITE') + pill(77, 27.8, 14, 'CANCEL');
const groupForm = text(40, 12.5, 'Group Admin') + field(40, 17.8, 51, 'Enter name or email address') + pill(40, 24.5, 14, 'BACK') + pill(77, 24.5, 14, 'DONE');

const download = chrome('', '', 'Mobile App', { items: ['Mobile App'], plain: true }) +
  rect(113, 8, 14, 9, '#fff', '#eee') + text(116, 10.5, 'Profile') + text(116, 14.7, 'Logout') +
  rect(37.5, 37, 29.500, 12.300, '#fff', '#777', 2) + text(52.2, 41.5, 'DOWNLOAD', 2.4, '#000', 'middle') + text(52.2, 44.8, 'IOS APP', 2.4, '#000', 'middle') +
  rect(78.5, 37, 29, 13, '#fff', '#777', 2) + text(93, 41.5, 'DOWNLOAD', 2.4, '#000', 'middle') + text(93, 44.8, 'ANDROID APP', 2.4, '#000', 'middle');
const preview = FI + rect(0, 0, W, H, 'rgba(0,0,0,.5)') + rect(15, 5.3, 93, 73, '#fff') + text(61.5, 41, 'FILE PREVIEW', 3.6, '#999', 'middle');

const boards = [
  [764.5, 135, 'Register 1 - Admin', welcome('Welcome to Mobilize', ['You are invited to use Mobilize by john@mobilize.com', 'Please fill in the following information to activate'], 'First Name', 'Last Name', 'NEXT')],
  [901.5, 135, 'Register 2 - Admin', welcome('Welcome to Mobilize', ['Welcome to Mobilize, John Doe!', 'Please choose a password to use with your login'], 'Password', 'Confirm Password', 'CREATE ACCOUNT')],
  [1036.5, 135, 'Login - Admin', welcome('Login', [], 'Email', 'Password', 'LOG INTO ACCOUNT', true)],
  [1170, 135, 'Download - Admin', download],
  [1304.5, 135, 'User Profile - Admin', profile({ title: 'Profile', active: 'Mobile App', items: ['Mobile App'], plain: true })],
  [1170, 224, 'Files - Root - Admin View', F],
  [1304.5, 224, 'Files - Hover - Admin View', FH],
  [1438.5, 224, 'Files - Edit - Admin View', dim(FH, 18, 30, 'Edit Folder', entry('Folder Name', 'Top Folder A'))],
  [1573, 224, 'Files - Delete - Admin View', dim(FH, 18, 30, 'Delete Folder', ask('Are you sure you want to delete this folder?'))],
  [1304.5, 314.5, 'Files - Folder - Admin View', FIH],
  [1438.5, 314.5, 'Files - Preview - Admin View', preview],
  [1573, 314.5, 'Files - Delete File - Admin', dim(FIH, 18, 30, 'Delete File', ask('Are you sure you want to delete this file?'))],
  [1304.5, 404, 'Files - Create - Admin View', dim(F, 18.5, 29.5, 'Create Folder', entry('Folder Name', 'New Folder'))],
  [1438.5, 404, 'Files - Upload - Admin View', dim(F, 18.5, 29.5, 'Upload File', entry('Choose File', 'Browse'))],
  [1170, 495.5, 'Users - Admin View', U],
  [1304.5, 495.5, 'Users - Hover - Admin View', UH],
  [1438.5, 495.5, 'Users - Edit - Admin View', UP],
  [1573, 495.5, 'Users - Delete - Admin View', dim(UP, 19.3, 29.4, 'Delete User', ask('Are you sure you want to delete this user?'))],
  [1708.5, 495.5, 'Users - Discard - Admin View', dim(UP, 19.3, 29.4, 'Discard Changes', ask('You have unsaved changes. Discard them?'))],
  [1843.5, 495.5, 'Users - Delete - List', dim(UH, 19.3, 29.4, 'Delete User', ask('Are you sure you want to delete this user?'))],
  [1304.5, 584, 'Users - Create - Admin View', dim(U, 19.3, 29.4, 'Create User', emailForm)],
  [1438.5, 584, 'Users - Create Error - Admin', dim(U, 19.3, 33, 'Create User', emailErr)],
  [1170, 675.5, 'Groups - Admin View', G],
  [1304.5, 675.5, 'Groups - Hover - Admin View', GH],
  [1438.5, 675.5, 'Groups - Edit - Admin View', GP],
  [1575, 675.5, 'Groups - Add Admin - Admin', dim(GP, 19.3, 30.5, 'Add a Group Admin', groupForm)],
  [1304.5, 765.5, 'Groups - Create - Admin View', dim(GH, 19.6, 29.4, 'Add Group', entry('Group Name', 'Marketing'))],
  [1438.5, 765.5, 'Groups - Label - Admin View', dim(GH, 19.6, 30.4, 'Choose a Unique Group Tag', unique(false))],
  [1575, 765.5, 'Groups - Label Error - Admin', dim(GH, 19.6, 30.4, 'Choose a Unique Group Tag', unique(true))],
  [1711, 765.5, 'Groups - Admin - Admin View', dim(GH, 19.6, 30.4, 'Add a Group Admin', groupForm)],
  [1170, 858, 'Files - Group Admin View', files({ rows: ['o', 'o', 'o', 'b'], items: three })],
  [1170, 948, 'Groups - Group Admin', people({ kind: 'Groups', rows: ['b', 'o'], items: three, nobtn: true })],
  [1304.5, 948, 'Groups - Users - Group Admin', GU],
  [1438.5, 948, 'Groups - Hover - Group Admin', GUH],
  [1575, 948, 'Groups - Remove - Group Admin', dim(GUH, 19.3, 29.8, 'Remove User', ask('Are you sure you want to remove this user?'))]
];

document.getElementById('canvas').innerHTML = boards.map(([x, y, name, body]) =>
  `<svg class="board" style="left:${x - OX}px;top:${y - OY}px" width="130" height="82" preserveAspectRatio="none" viewBox="0 0 ${W} ${H}">` +
  text(0.5, -1.1, name, 2.6, '#ccc') + body + `<rect x="0" y="0" width="${W}" height="${H}" fill="none" stroke="#aaa" stroke-width="1"/></svg>`
).join('');
```
